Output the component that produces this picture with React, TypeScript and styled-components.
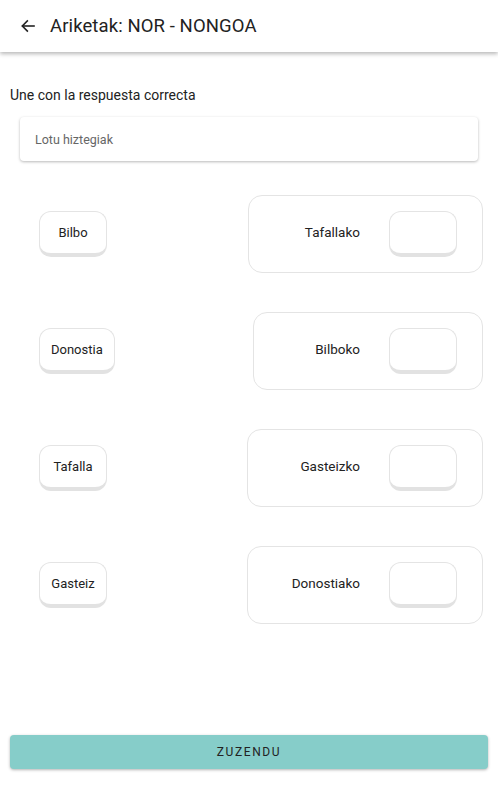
import React from "react";
import styled, { createGlobalStyle } from "styled-components";

const Global = createGlobalStyle`
  html, body { margin: 0; padding: 0; background: #fff; }
  body { font-family: Roboto, "Noto Sans", sans-serif; font-weight: 400; color: #222; }
  * { box-sizing: border-box; }
`;

const Page = styled.div`
  height: 100vh;
  display: flex;
  flex-direction: column;
`;

const AppBar = styled.header`
  height: 52px;
  display: flex;
  align-items: center;
  padding-left: 20px;
  gap: 14px;
  background: #fff;
  box-shadow: 0 2px 4px rgba(0, 0, 0, 0.28);
`;

const Title = styled.h1`
  margin: 0;
  font-size: 18.5px;
  font-weight: 400;
  color: #222;
  letter-spacing: 0.1px;
`;

const Content = styled.main`
  flex: 1;
  display: flex;
  flex-direction: column;
`;

const Instruction = styled.p`
  margin: 34px 0 0 10px;
  font-size: 14px;
  line-height: 18px;
  color: #222;
`;

const HintCard = styled.div`
  margin: 13px 20px 0 20px;
  height: 44px;
  display: flex;
  align-items: center;
  padding-left: 15px;
  border-radius: 4px;
  background: #fff;
  box-shadow: 0 1px 3px rgba(0, 0, 0, 0.28);
  font-size: 12.5px;
  color: #666;
`;

const Rows = styled.div`
  margin-top: 34px;
  display: flex;
  flex-direction: column;
  gap: 39px;
  padding: 0 15px 0 39px;
`;

const Row = styled.div`
  height: 78px;
  display: flex;
  align-items: center;
  justify-content: space-between;
`;

const Chip = styled.div`
  min-width: 68px;
  height: 46px;
  padding: 0 11px;
  display: flex;
  align-items: center;
  justify-content: center;
  border: 1.5px solid #e4e4e4;
  border-bottom: 4px solid #e2e2e2;
  border-radius: 12px;
  background: #fff;
  font-size: 13px;
  color: #222;
`;

const Slot = styled(Chip)`
  width: 68px;
  padding: 0;
`;

const Label = styled.span`
  margin-bottom: 4px;
`;

const Target = styled.div<{ $w: number; $gap: number }>`
  width: ${(p) => p.$w}px;
  height: 78px;
  display: flex;
  align-items: center;
  justify-content: flex-end;
  gap: ${(p) => p.$gap}px;
  padding: 0 25px 0 0;
  border: 1.5px solid #e4e4e4;
  border-radius: 14px;
  font-size: 13.5px;
  color: #222;
`;

const Footer = styled.div`
  margin-top: auto;
  padding: 0 10px 31px;
`;

const Button = styled.button`
  width: 100%;
  height: 34px;
  border: none;
  border-radius: 4px;
  background: #86cdc9;
  box-shadow: 0 1px 3px rgba(0, 0, 0, 0.3);
  font-family: Roboto, "Noto Sans", sans-serif;
  font-weight: 400;
  font-size: 12px;
  letter-spacing: 1.6px;
  color: #222;
`;

const BackIcon = () => (
  <svg width="16" height="16" viewBox="0 0 24 24" fill="none" stroke="#222" strokeWidth="2.4" strokeLinecap="square">
    <path d="M21 12H4" />
    <path d="M11 4.5L3.5 12L11 19.5" />
  </svg>
);

const pairs = [
  { left: "Bilbo", right: "Tafallako", w: 235, gap: 29 },
  { left: "Donostia", right: "Bilboko", w: 230, gap: 29 },
  { left: "Tafalla", right: "Gasteizko", w: 236, gap: 29 },
  { left: "Gasteiz", right: "Donostiako", w: 236, gap: 29 },
];

export default function App() {
  return (
    <Page>
      <Global />
      <AppBar>
        <BackIcon />
        <Title>Ariketak: NOR - NONGOA</Title>
      </AppBar>
      <Content>
        <Instruction>Une con la respuesta correcta</Instruction>
        <HintCard>Lotu hiztegiak</HintCard>
        <Rows>
          {pairs.map((p) => (
            <Row key={p.left}>
              <Chip>{p.left}</Chip>
              <Target $w={p.w} $gap={p.gap}>
                <Label>{p.right}</Label>
                <Slot />
              </Target>
            </Row>
          ))}
        </Rows>
        <Footer>
          <Button>ZUZENDU</Button>
        </Footer>
      </Content>
    </Page>
  );
}
